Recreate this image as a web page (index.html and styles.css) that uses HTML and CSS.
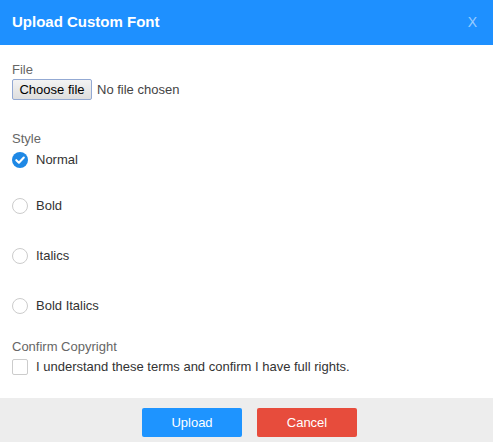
FILE: index.html
```html
<!DOCTYPE html>
<html lang="en">
<head>
<meta charset="utf-8">
<title>Upload Custom Font</title>
<link rel="stylesheet" href="styles.css">
</head>
<body>
<div class="dialog">
  <header class="dialog-header">
    <h1 class="dialog-title">Upload Custom Font</h1>
    <span class="dialog-close">X</span>
  </header>
  <main class="dialog-body">
    <div class="field field-file">
      <div class="field-label">File</div>
      <div class="file-row">
        <span class="file-button">Choose file</span>
        <span class="file-status">No file chosen</span>
      </div>
    </div>
    <div class="field field-style">
      <div class="field-label">Style</div>
      <div class="options">
        <div class="option option-first">
          <span class="radio radio-checked">
            <svg viewBox="0 0 16 16" width="16" height="16"><circle cx="8" cy="8" r="8" fill="#1e88e5"/><path d="M4.3 8.2 L6.9 10.7 L11.8 5.6" fill="none" stroke="#fff" stroke-width="2.1" stroke-linecap="round" stroke-linejoin="round"/></svg>
          </span>
          <span class="option-text">Normal</span>
        </div>
        <div class="option">
          <span class="radio"></span>
          <span class="option-text">Bold</span>
        </div>
        <div class="option">
          <span class="radio"></span>
          <span class="option-text">Italics</span>
        </div>
        <div class="option">
          <span class="radio"></span>
          <span class="option-text">Bold Italics</span>
        </div>
      </div>
    </div>
    <div class="field field-copyright">
      <div class="field-label">Confirm Copyright</div>
      <div class="option check-row">
        <span class="checkbox"></span>
        <span class="option-text">I understand these terms and confirm I have full rights.</span>
      </div>
    </div>
  </main>
  <footer class="dialog-footer">
    <button class="btn btn-primary">Upload</button>
    <button class="btn btn-danger">Cancel</button>
  </footer>
</div>
</body>
</html>
```

FILE: styles.css
```css
html, body {
  margin: 0;
  padding: 0;
  background: #fff;
}
body {
  font-family: "Liberation Sans", Arial, sans-serif;
  font-size: 13px;
  color: #333;
}
.dialog {
  width: 493px;
  height: 442px;
  display: flex;
  flex-direction: column;
}
.dialog-header {
  height: 45px;
  background: #1e90ff;
  display: flex;
  align-items: center;
  justify-content: space-between;
  padding: 0 16px 0 12px;
  box-sizing: border-box;
}
.dialog-title {
  margin: 0;
  font-size: 15px;
  font-weight: bold;
  color: #fff;
  line-height: 18px;
  margin-top: -2px;
}
.dialog-close {
  font-size: 14px;
  color: rgba(255, 255, 255, 0.55);
  line-height: 16px;
  margin-top: -2px;
}
.dialog-body {
  flex: 1;
  padding: 17px 12px 0 12px;
}
.field-label {
  color: #666;
  line-height: 16px;
}
.file-row {
  display: flex;
  align-items: center;
  margin-top: 1px;
}
.file-button {
  display: inline-block;
  box-sizing: border-box;
  width: 80px;
  height: 21px;
  line-height: 19px;
  text-align: center;
  color: #000;
  border: 1px solid #93a9d3;
  border-radius: 2px;
  background: linear-gradient(#f3f3f3, #dedede);
  font-size: 13px;
}
.file-status {
  margin-left: 5px;
  color: #444;
}
.field-style {
  margin-top: 31px;
}
.options {
  margin-top: 5px;
}
.option {
  display: flex;
  align-items: center;
  height: 16px;
  line-height: 16px;
  margin-bottom: 34px;
}
.option-first {
  margin-bottom: 30px;
}
.options .option:last-child {
  margin-bottom: 0;
}
.radio {
  width: 16px;
  height: 16px;
  box-sizing: border-box;
  border: 1px solid #ccc;
  border-radius: 50%;
  flex: none;
  display: block;
}
.radio-checked {
  border: none;
}
.radio svg {
  display: block;
}
.option-text {
  margin-left: 8px;
  color: #333;
}
.field-copyright {
  margin-top: 25px;
}
.check-row {
  margin-top: 4px;
  margin-bottom: 0;
}
.checkbox {
  width: 16px;
  height: 16px;
  box-sizing: border-box;
  border: 1px solid #ccc;
  border-radius: 2px;
  flex: none;
}
.dialog-footer {
  height: 44px;
  background: #ededed;
  display: flex;
  justify-content: center;
  align-items: flex-start;
  gap: 15px;
  padding: 10px 0 0 6px;
  box-sizing: border-box;
}
.btn {
  width: 100px;
  height: 29px;
  border: none;
  border-radius: 2px;
  color: #fff;
  font-family: "Liberation Sans", Arial, sans-serif;
  font-size: 13px;
  padding: 0;
}
.btn-primary {
  background: #1e94ff;
}
.btn-danger {
  background: #e74c3c;
}
```
